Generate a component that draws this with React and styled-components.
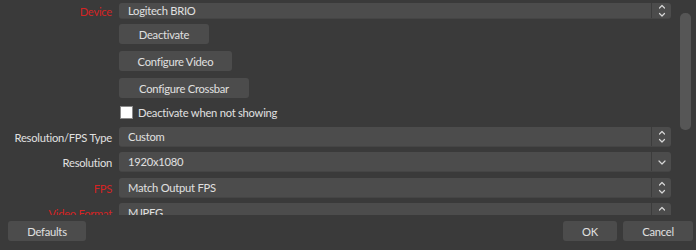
import React from 'react';
import styled, { createGlobalStyle } from 'styled-components';

const GlobalStyle = createGlobalStyle`
  html, body {
    margin: 0;
    padding: 0;
    background: #3a3a3a;
  }
  body {
    font-family: Lato, "Open Sans", sans-serif;
    font-size: 11.2px;
    letter-spacing: -0.25px;
    color: #e0e0e0;
  }
`;

const Arrows = ({ kind }) => (
  <svg width="10" height="20" viewBox="0 0 10 20" fill="none" stroke="#d6d6d6" strokeWidth="1.2" strokeLinecap="round" strokeLinejoin="round">
    {kind === 'down' ? (
      <path d="M2 9 L5 12 L8 9" />
    ) : (
      <>
        <path d="M2.5 7 L5 4.5 L7.5 7" />
        {kind !== 'up' && <path d="M2.5 12.5 L5 15 L7.5 12.5" />}
      </>
    )}
  </svg>
);

const ComboBox = ({ value, kind = 'spin' }) => (
  <StyledCombo>
    <ComboText>{value}</ComboText>
    <ComboArrow>
      <Arrows kind={kind} />
    </ComboArrow>
  </StyledCombo>
);

const App = () => {
  return (
    <>
      <GlobalStyle />
      <Dialog>
        <ScrollArea>
          <Form>
            <Row $mt={3} $h={16}>
              <Label $required>Device</Label>
              <ComboBox value="Logitech BRIO" />
            </Row>
            <Row $mt={5}>
              <span />
              <ButtonCell>
                <Button $w={90}>Deactivate</Button>
              </ButtonCell>
            </Row>
            <Row $mt={7}>
              <span />
              <ButtonCell>
                <Button $w={113}>Configure Video</Button>
              </ButtonCell>
            </Row>
            <Row $mt={7}>
              <span />
              <ButtonCell>
                <Button $w={130}>Configure Crossbar</Button>
              </ButtonCell>
            </Row>
            <Row $mt={4}>
              <span />
              <CheckRow>
                <CheckBox />
                <span>Deactivate when not showing</span>
              </CheckRow>
            </Row>
            <Row $mt={5}>
              <Label>Resolution/FPS Type</Label>
              <ComboBox value="Custom" />
            </Row>
            <Row $mt={5}>
              <Label>Resolution</Label>
              <ComboBox value="1920x1080" kind="down" />
            </Row>
            <Row $mt={6}>
              <Label $required>FPS</Label>
              <ComboBox value="Match Output FPS" />
            </Row>
            <Row $mt={5}>
              <Label $required>Video Format</Label>
              <ComboBox value="MJPEG" kind="up" />
            </Row>
          </Form>
          <ScrollTrack>
            <ScrollHandle />
          </ScrollTrack>
        </ScrollArea>
        <ButtonBar>
          <Button $w={78}>Defaults</Button>
          <Spacer />
          <Button $w={54}>OK</Button>
          <Button $w={70}>Cancel</Button>
        </ButtonBar>
      </Dialog>
    </>
  );
};

export default App;

// Styled components

const Dialog = styled.div`
  width: 696px;
  height: 250px;
  display: flex;
  flex-direction: column;
  background: #3a3a3a;
  overflow: hidden;
`;

const ScrollArea = styled.div`
  height: 215px;
  display: flex;
  overflow: hidden;
`;

const Form = styled.div`
  flex: 1;
  display: flex;
  flex-direction: column;
  padding-right: 9px;
`;

const Row = styled.div`
  display: grid;
  grid-template-columns: 112px 1fr;
  column-gap: 7px;
  align-items: center;
  height: ${(p) => p.$h || 20}px;
  margin-top: ${(p) => p.$mt || 0}px;
  flex-shrink: 0;
`;

const Label = styled.div`
  text-align: right;
  white-space: nowrap;
  color: ${(p) => (p.$required ? '#d42424' : '#e0e0e0')};
`;

const StyledCombo = styled.div`
  display: flex;
  align-items: center;
  height: 100%;
  background: #4c4c4c;
  border-radius: 3px;
  border-bottom: 1px solid #454545;
  box-sizing: border-box;
  overflow: hidden;
`;

const ComboText = styled.div`
  flex: 1;
  padding-left: 9px;
  white-space: nowrap;
`;

const ComboArrow = styled.div`
  width: 19px;
  height: 100%;
  display: flex;
  align-items: center;
  justify-content: center;
  border-left: 1px solid #3c3c3c;
`;

const ButtonCell = styled.div`
  display: flex;
`;

const Button = styled.button`
  width: ${(p) => p.$w}px;
  height: 20px;
  padding: 0;
  border: none;
  border-radius: 3px;
  background: #4c4c4c;
  color: #e0e0e0;
  font-family: inherit;
  font-size: inherit;
  letter-spacing: inherit;
  text-align: center;
  cursor: pointer;
`;

const CheckRow = styled.div`
  display: flex;
  align-items: center;
  gap: 5px;
  padding-left: 1px;
`;

const CheckBox = styled.div`
  width: 11px;
  height: 11px;
  background: #ffffff;
  border: 1px solid #8a8a8a;
`;

const ScrollTrack = styled.div`
  width: 11px;
  margin-right: 5px;
  padding-top: 13px;
`;

const ScrollHandle = styled.div`
  height: 117px;
  background: #565656;
  border-radius: 5px;
`;

const ButtonBar = styled.div`
  display: flex;
  align-items: flex-start;
  gap: 6px;
  padding: 6px 3px 0 8px;
`;

const Spacer = styled.div`
  flex: 1;
`;
